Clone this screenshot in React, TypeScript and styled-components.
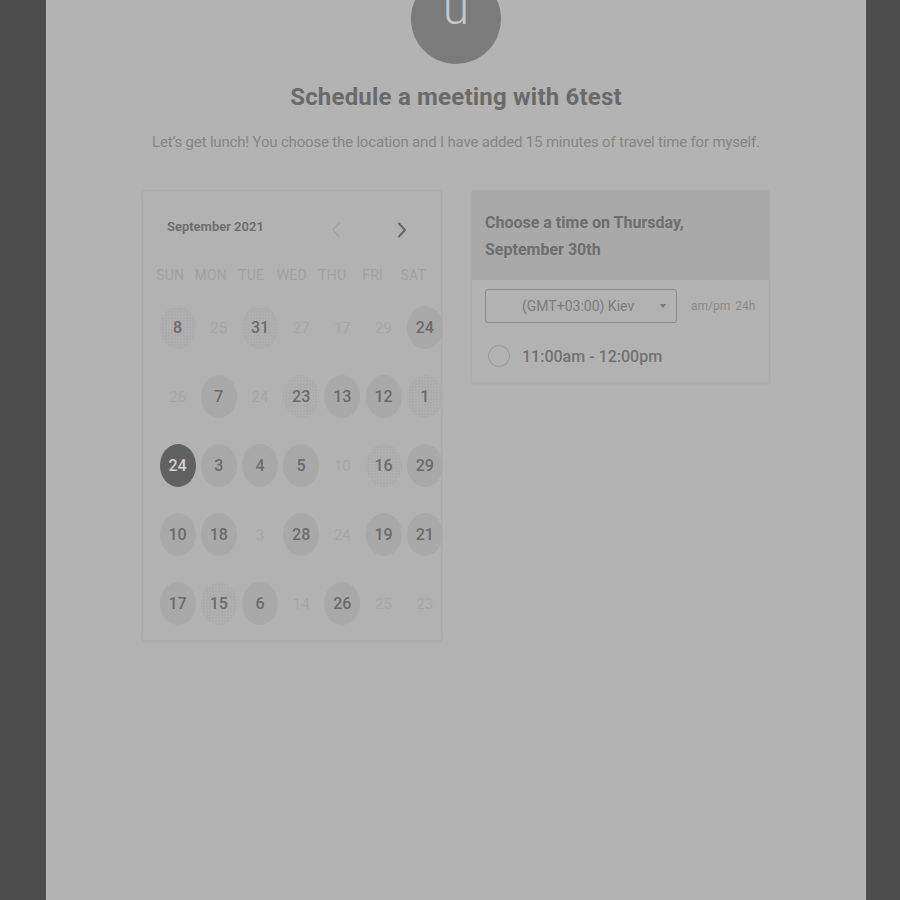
import React from "react";
import styled, { createGlobalStyle, css } from "styled-components";

const Global = createGlobalStyle`
  html, body { margin: 0; padding: 0; background: #4d4d4d; }
  body { font-family: Roboto, "Liberation Sans", Arial, sans-serif; }
  * { box-sizing: border-box; }
`;

const Page = styled.div`
  height: 900px;
  overflow: hidden;
  display: flex;
  padding: 0 34px 0 46px;
  background: #4d4d4d;
`;

const Panel = styled.main`
  flex: 1;
  background: #b3b3b3;
  border-left: 1px solid #b9b9b9;
  border-right: 1px solid #b9b9b9;
  display: flex;
  flex-direction: column;
  align-items: center;
`;

const Avatar = styled.div`
  margin-top: -26px;
  width: 90px;
  height: 90px;
  border-radius: 50%;
  background: #7b7b7b;
  color: #c6c6c6;
  font-size: 48px;
  font-weight: 300;
  line-height: 68px;
  display: flex;
  justify-content: center;
  align-items: flex-start;
`;

const Title = styled.h1`
  margin: 19px 0 0;
  font-size: 24px;
  line-height: 28px;
  font-weight: 700;
  letter-spacing: 0.2px;
  color: #6a6a6a;
`;

const Subtitle = styled.p`
  margin: 21px 0 0;
  font-size: 15px;
  line-height: 20px;
  font-weight: 400;
  letter-spacing: -0.18px;
  color: #868686;
`;

const Cards = styled.div`
  margin-top: 38px;
  display: flex;
  gap: 29px;
  align-items: flex-start;
`;

const Card = styled.section`
  width: 300px;
  border: 1px solid #acacac;
  border-radius: 3px;
  background: #b2b2b2;
  box-shadow: 0 1px 2px rgba(0, 0, 0, 0.05);
`;

const CalendarCard = styled(Card)`
  height: 451px;
  padding: 26px 0 0;
`;

const MonthBar = styled.div`
  display: flex;
  align-items: center;
  padding: 0 34px 0 24px;
  height: 18px;
`;

const MonthLabel = styled.span`
  font-size: 13px;
  font-weight: 600;
  color: #6c6c6c;
  flex: 1;
`;

const NavButton = styled.span<{ $faint?: boolean }>`
  display: flex;
  width: 10px;
  justify-content: center;
  margin-top: 8px;
  color: ${(p) => (p.$faint ? "#a2a2a2" : "#666666")};
  & + & { margin-left: 56px; }
`;

const WeekHeader = styled.div`
  display: grid;
  grid-template-columns: repeat(7, 40.5px);
  padding-left: 7px;
  margin-top: 31px;
`;

const WeekDay = styled.span`
  text-align: center;
  font-size: 14px;
  line-height: 18px;
  color: #a1a1a1;
  letter-spacing: 0.2px;
`;

const DayGrid = styled.div`
  display: grid;
  grid-template-columns: repeat(7, 41.2px);
  grid-auto-rows: 43px;
  row-gap: 26px;
  padding-left: 14px;
  margin-top: 22px;
`;

type DayKind = "off" | "open" | "dotted" | "selected";

const Day = styled.span<{ $kind: DayKind }>`
  justify-self: center;
  width: 36px;
  height: 43px;
  border-radius: 50%;
  display: flex;
  align-items: center;
  justify-content: center;
  font-size: 16px;
  font-weight: 500;
  color: #6b6b6b;
  ${(p) =>
    p.$kind === "off" &&
    css`
      font-weight: 400;
      font-size: 15px;
      color: #a6a6a6;
    `}
  ${(p) =>
    p.$kind === "open" &&
    css`
      background: #a9a9a9;
    `}
  ${(p) =>
    p.$kind === "dotted" &&
    css`
      background-color: #ababab;
      background-image: radial-gradient(circle, rgba(255, 255, 255, 0.07) 0.8px, transparent 1.3px);
      background-size: 3px 3px;
    `}
  ${(p) =>
    p.$kind === "selected" &&
    css`
      background: #616161;
      color: #d2d2d2;
    `}
`;

const TimeCard = styled(Card)`
  width: 299px;
  overflow: hidden;
`;

const TimeHeader = styled.div`
  background: #a9a9a9;
  padding: 18px 13px 17px;
  font-size: 16px;
  font-weight: 700;
  line-height: 27px;
  color: #6e6e6e;
`;

const TimeBody = styled.div`
  padding: 9px 13px 14px;
`;

const ZoneRow = styled.div`
  display: flex;
  align-items: center;
  gap: 14px;
`;

const Select = styled.div`
  flex-shrink: 0;
  width: 192px;
  height: 34px;
  border: 1px solid #8c8c8c;
  border-radius: 3px;
  display: flex;
  align-items: center;
  padding: 0 10px 0 36px;
  font-size: 14px;
  color: #7c7c7c;
`;

const SelectText = styled.span`
  flex: 1;
`;

const Caret = styled.span`
  width: 0;
  height: 0;
  border-left: 3px solid transparent;
  border-right: 3px solid transparent;
  border-top: 4px solid #777;
`;

const Formats = styled.span`
  display: flex;
  gap: 5px;
  font-size: 12px;
  color: #8a8a8a;
`;

const SlotRow = styled.label`
  display: flex;
  align-items: center;
  gap: 12px;
  margin-top: 21px;
  height: 24px;
`;

const Radio = styled.span`
  width: 22px;
  height: 22px;
  border-radius: 50%;
  border: 1.5px solid #989898;
  margin-left: 3px;
`;

const SlotText = styled.span`
  font-size: 16px;
  font-weight: 500;
  color: #727272;
`;

const Chevron = ({ dir }: { dir: "left" | "right" }) => (
  <svg width="10" height="16" viewBox="0 0 10 16" fill="none">
    <polyline
      points={dir === "left" ? "8,1.5 2,8 8,14.5" : "2,1.5 8,8 2,14.5"}
      stroke="currentColor"
      strokeWidth={dir === "left" ? 1.3 : 2}
      strokeLinecap="round"
      strokeLinejoin="round"
    />
  </svg>
);

const weekDays = ["SUN", "MON", "TUE", "WED", "THU", "FRI", "SAT"];

const days: [string, DayKind][] = [
  ["8", "dotted"], ["25", "off"], ["31", "dotted"], ["27", "off"], ["17", "off"], ["29", "off"], ["24", "open"],
  ["26", "off"], ["7", "open"], ["24", "off"], ["23", "dotted"], ["13", "open"], ["12", "open"], ["1", "dotted"],
  ["24", "selected"], ["3", "open"], ["4", "open"], ["5", "open"], ["10", "off"], ["16", "dotted"], ["29", "open"],
  ["10", "open"], ["18", "open"], ["3", "off"], ["28", "open"], ["24", "off"], ["19", "open"], ["21", "open"],
  ["17", "open"], ["15", "dotted"], ["6", "open"], ["14", "off"], ["26", "open"], ["25", "off"], ["23", "off"],
];

export default function App() {
  return (
    <Page>
      <Global />
      <Panel>
        <Avatar>u</Avatar>
        <Title>Schedule a meeting with 6test</Title>
        <Subtitle>
          Let’s get lunch! You choose the location and I have added 15 minutes of travel time for myself.
        </Subtitle>
        <Cards>
          <CalendarCard>
            <MonthBar>
              <MonthLabel>September 2021</MonthLabel>
              <NavButton $faint>
                <Chevron dir="left" />
              </NavButton>
              <NavButton>
                <Chevron dir="right" />
              </NavButton>
            </MonthBar>
            <WeekHeader>
              {weekDays.map((d) => (
                <WeekDay key={d}>{d}</WeekDay>
              ))}
            </WeekHeader>
            <DayGrid>
              {days.map(([n, k], i) => (
                <Day key={i} $kind={k}>
                  {n}
                </Day>
              ))}
            </DayGrid>
          </CalendarCard>
          <TimeCard>
            <TimeHeader>
              Choose a time on Thursday,
              <br />
              September 30th
            </TimeHeader>
            <TimeBody>
              <ZoneRow>
                <Select>
                  <SelectText>(GMT+03:00) Kiev</SelectText>
                  <Caret />
                </Select>
                <Formats>
                  <span>am/pm</span>
                  <span>24h</span>
                </Formats>
              </ZoneRow>
              <SlotRow>
                <Radio />
                <SlotText>11:00am - 12:00pm</SlotText>
              </SlotRow>
            </TimeBody>
          </TimeCard>
        </Cards>
      </Panel>
    </Page>
  );
}
